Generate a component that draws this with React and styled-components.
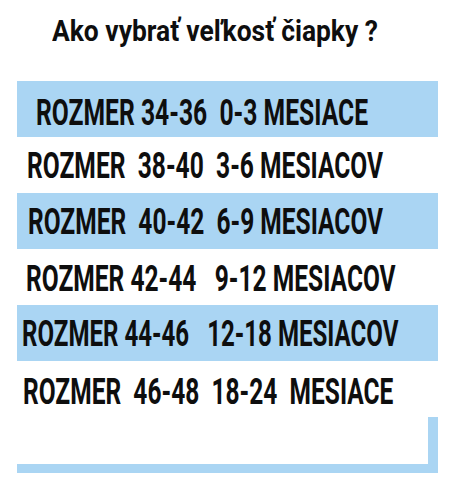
import React from "react";
import styled, { createGlobalStyle } from "styled-components";

const BLUE = "#aad5f3";

const GlobalStyle = createGlobalStyle`
  html, body { margin: 0; padding: 0; background: #ffffff; overflow: hidden; }
`;

const Page = styled.main`
  width: 460px;
  height: 504px;
  font-family: Roboto, "Liberation Sans", sans-serif;
  color: #0e0e0e;
`;

const Title = styled.h1`
  margin: 0;
  box-sizing: border-box;
  height: 81px;
  padding: 16px 0 0 52px;
  font-size: 30px;
  line-height: 30px;
  font-weight: 700;
  white-space: pre;
  overflow: hidden;
`;

const Table = styled.section`
  margin-left: 17px;
  width: 421px;
  display: grid;
  grid-auto-rows: 56px;
`;

const Row = styled.div`
  box-sizing: border-box;
  height: 56px;
  padding: ${(p) => p.$dy}px 0 0 ${(p) => p.$indent}px;
  line-height: 56px;
  font-size: 36px;
  font-weight: 700;
  background: ${(p) => (p.$shaded ? BLUE : "#ffffff")};
  overflow: hidden;
`;

const Squeeze = styled.span`
  display: inline-block;
  white-space: pre;
  transform: scaleX(${(p) => p.$sx});
  transform-origin: left center;
`;

const EmptyBox = styled.div`
  box-sizing: border-box;
  height: 56px;
  background: #ffffff;
  border-right: 10px solid ${BLUE};
  border-bottom: 9px solid ${BLUE};
`;

const rows = [
  { text: "ROZMER 34-36  0-3 MESIACE", indent: 19, dy: 4, sx: 0.685, shaded: true },
  { text: "ROZMER  38-40  3-6 MESIACOV", indent: 10, dy: 1, sx: 0.683, shaded: false },
  { text: "ROZMER  40-42  6-9 MESIACOV", indent: 11, dy: 1, sx: 0.681, shaded: true },
  { text: "ROZMER 42-44   9-12 MESIACOV", indent: 9, dy: 2, sx: 0.682, shaded: false },
  { text: "ROZMER 44-46   12-18 MESIACOV", indent: 5, dy: 1, sx: 0.669, shaded: true },
  { text: "ROZMER  46-48  18-24  MESIACE", indent: 6, dy: 3, sx: 0.681, shaded: false },
];

export default function App() {
  return (
    <Page>
      <GlobalStyle />
      <Title>
        <Squeeze $sx={0.88}>Ako vybrať veľkosť čiapky ?</Squeeze>
      </Title>
      <Table>
        {rows.map((r) => (
          <Row key={r.text} $indent={r.indent} $dy={r.dy} $shaded={r.shaded}>
            <Squeeze $sx={r.sx}>{r.text}</Squeeze>
          </Row>
        ))}
        <EmptyBox />
      </Table>
    </Page>
  );
}
